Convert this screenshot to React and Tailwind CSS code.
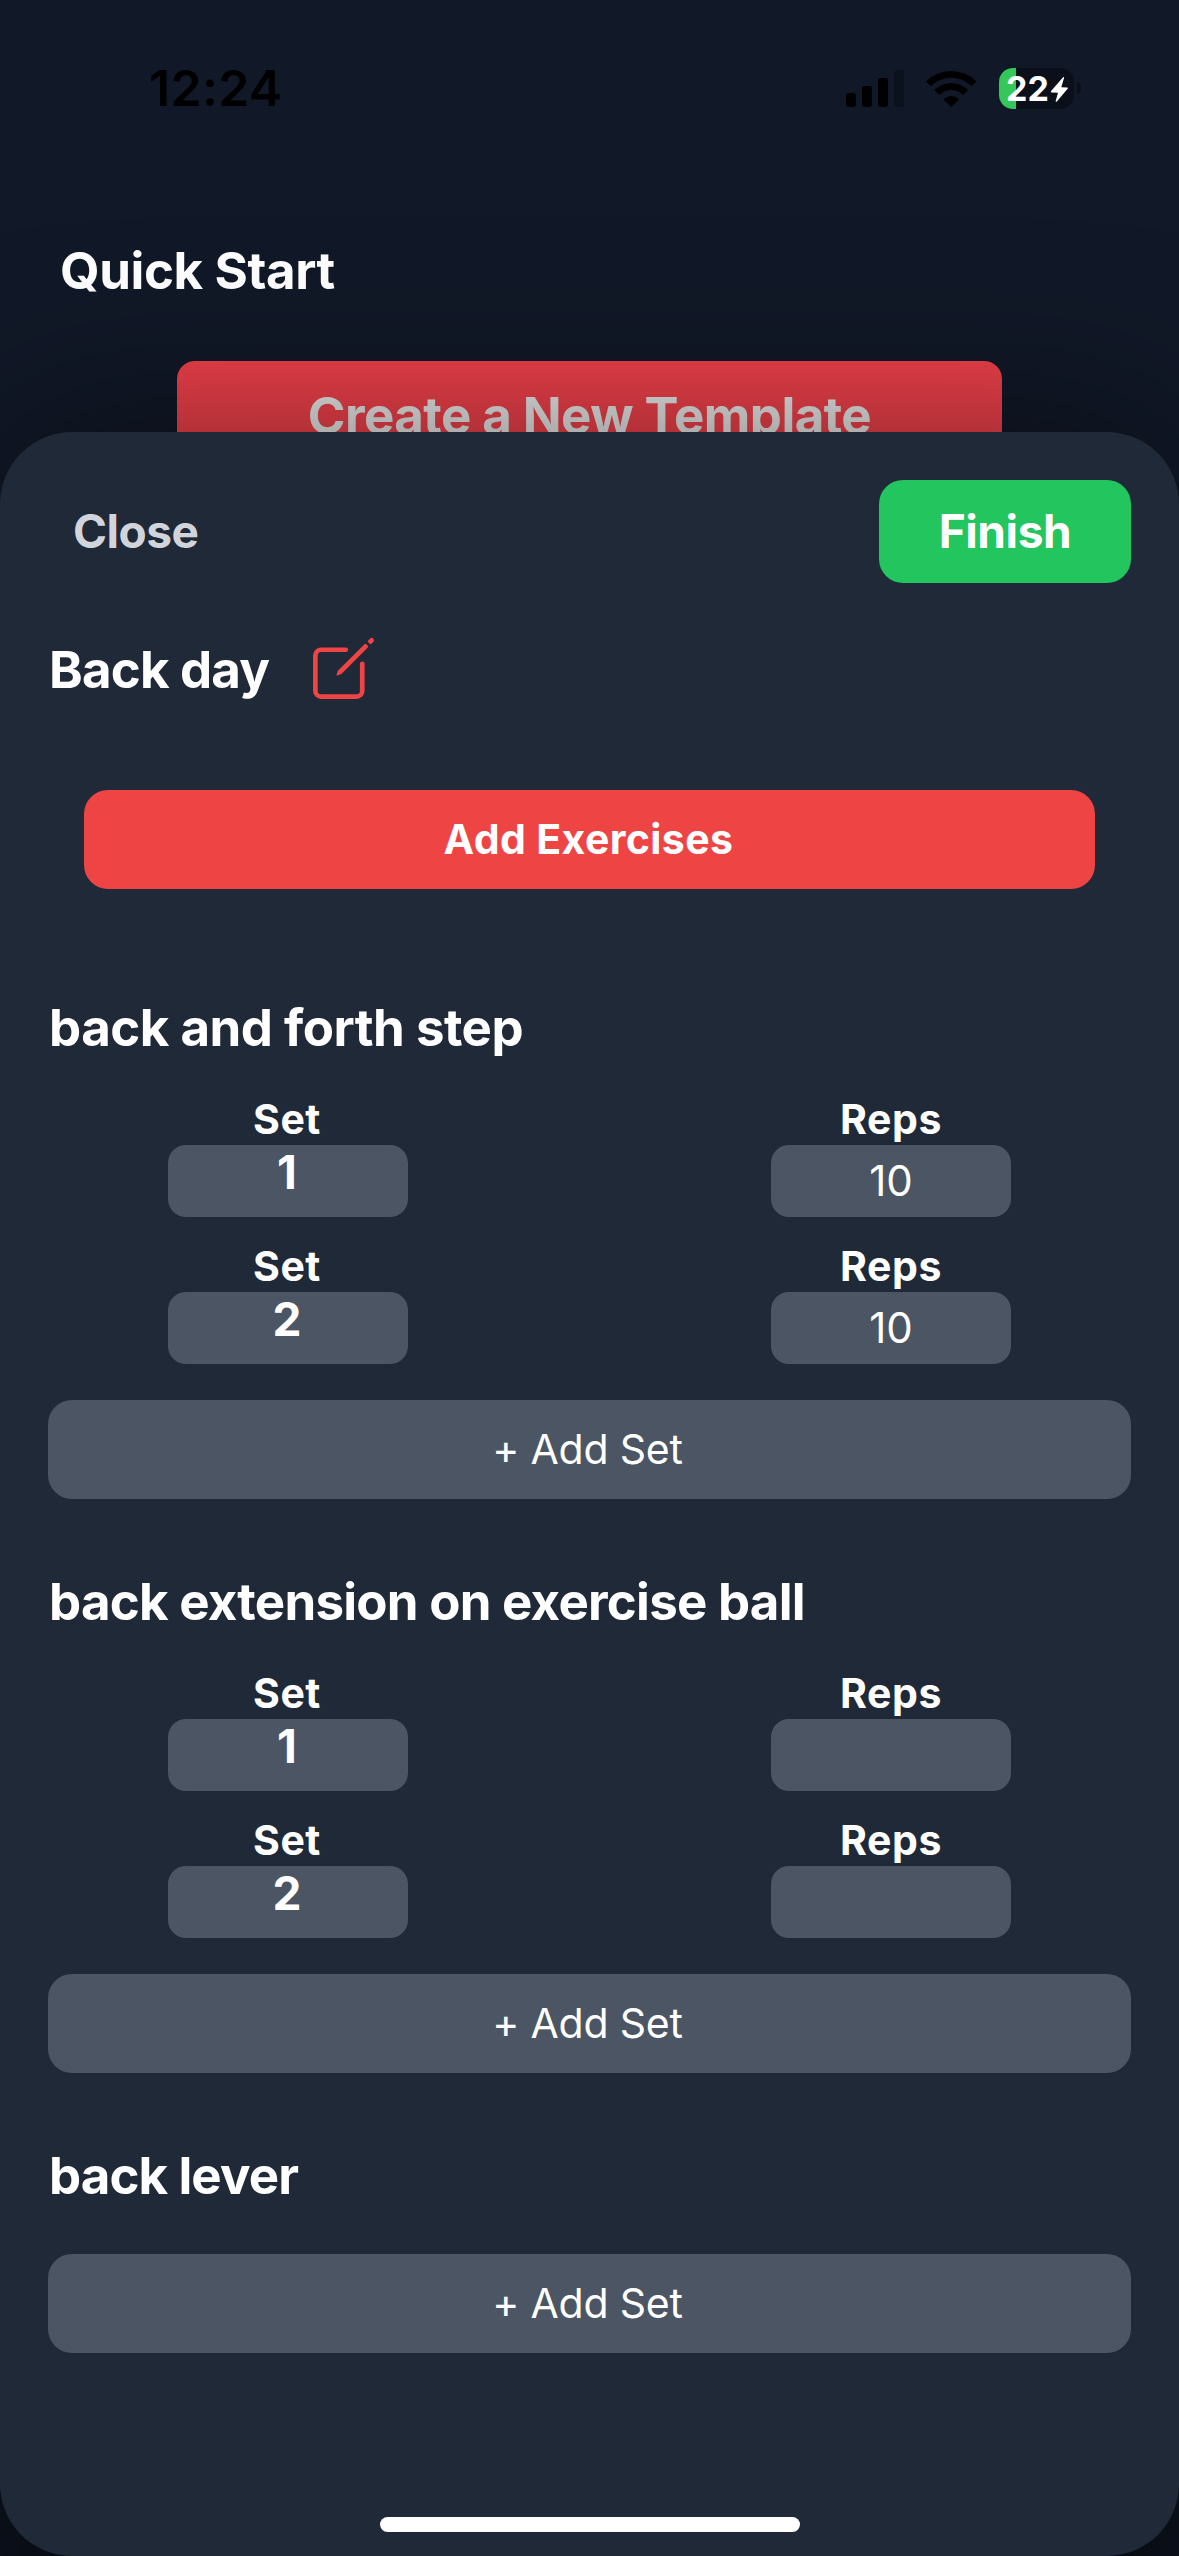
import React from "react";
import { IoCreateOutline } from "react-icons/io5";

const exercises = [
  { name: "back and forth step", tracking: "tracking-[-0.5px]", sets: ["10", "10"] },
  { name: "back extension on exercise ball", tracking: "tracking-[-0.75px]", sets: ["", ""] },
  { name: "back lever", tracking: "tracking-[-0.9px]", sets: [] },
];

function Signal() {
  return (
    <svg width="58" height="37" viewBox="0 0 58 37">
      <rect x="0" y="23" width="10" height="14" rx="3" />
      <rect x="16" y="16" width="10" height="21" rx="3" />
      <rect x="32" y="8" width="10" height="29" rx="3" />
      <rect x="48" y="0" width="10" height="37" rx="3" opacity="0.25" />
    </svg>
  );
}

function Wifi() {
  return (
    <svg width="50" height="37" viewBox="0 0 50 37">
      <path d="M0.6 10.9A35.5 35.5 0 0 1 49.9 10.9Q50.5 11.6 49.9 12.2L46.2 15.6Q45.5 16.2 44.8 15.6A28.5 28.5 0 0 0 5.7 15.6Q5 16.2 4.3 15.6L0.6 12.2Q0 11.6 0.6 10.9Z" />
      <path d="M9 19.6A23.5 23.5 0 0 1 41.5 19.6Q42.1 20.2 41.5 20.8L37.7 24.4Q37 25 36.3 24.4A16.4 16.4 0 0 0 14.2 24.4Q13.5 25 12.8 24.4L9 20.8Q8.4 20.2 9 19.6Z" />
      <path d="M18 28.7A11 11 0 0 1 32.5 28.7Q33.2 29.4 32.5 30.1L25.9 36.6Q25.25 37.2 24.6 36.6L18 30.1Q17.3 29.4 18 28.7Z" />
    </svg>
  );
}

function Battery() {
  return (
    <div className="flex items-center gap-[3px]">
      <div className="relative flex h-[41px] w-[75px] items-center overflow-hidden rounded-[14px] bg-black/35 pl-[7px]">
        <div className="absolute inset-y-0 left-0 w-[17px] bg-[#34c759]" />
        <span className="relative text-[34px] leading-[41px] font-bold text-white">22</span>
        <svg className="absolute top-0 left-0" width="75" height="41" viewBox="0 0 75 41">
          <path d="M64.3 9L51.9 23.2Q51.6 24.4 52.6 24.5L59 24.7L56.6 33.2Q57 34.3 57.9 33.6L68.8 20.6Q69.2 19.5 68.2 19.4L62.3 19.2L65.1 9.8Q65.1 8.8 64.3 9Z" fill="#fff" />
        </svg>
      </div>
      <div className="h-[12px] w-[4px] rounded-r-[4px] bg-black/35" />
    </div>
  );
}

function SetRow({ number, reps }) {
  return (
    <div className="mb-9 flex justify-between px-[120px] text-center text-white">
      <div className="w-[240px]">
        <div className="h-[39px] pr-[2px] text-[41px] leading-[26px] font-bold tracking-[0.5px]">Set</div>
        <div className="h-[72px] rounded-[18px] bg-[#4b5563] pr-[2px] text-[46px] leading-[54px] font-bold">{number}</div>
      </div>
      <div className="w-[240px]">
        <div className="h-[39px] text-[41px] leading-[26px] font-bold tracking-[0.6px]">Reps</div>
        <div className="h-[72px] rounded-[18px] bg-[#4b5563] text-[42px] leading-[72px]">{reps}</div>
      </div>
    </div>
  );
}

function Exercise({ name, tracking, sets }) {
  return (
    <section>
      <h3 className={`mb-[47px] pl-px text-[51px] leading-[62px] font-bold whitespace-nowrap text-white ${tracking}`}>{name}</h3>
      {sets.map((reps, i) => (
        <SetRow key={i} number={i + 1} reps={reps} />
      ))}
      <button className="block h-[99px] w-full rounded-[24px] bg-[#4b5563] pr-[4px] text-[41px] leading-[99px] tracking-[-0.2px] text-white">
        + Add Set
      </button>
    </section>
  );
}

export default function App() {
  return (
    <div className="h-[2556px] w-[1179px] overflow-hidden bg-[#111827] font-['Inter',sans-serif]">
      <div className="flex items-center justify-between pt-[58px] pr-[98px] pl-[149px]">
        <span className="text-[50px] leading-[60px] font-semibold tracking-[0.3px] text-black">12:24</span>
        <div className="flex items-center">
          <Signal />
          <div className="ml-[22px]">
            <Wifi />
          </div>
          <div className="ml-[23px]">
            <Battery />
          </div>
        </div>
      </div>

      <h1 className="mt-[122px] ml-[60px] text-[51px] leading-[62px] font-bold tracking-[-0.4px] text-white">Quick Start</h1>
      <button className="mx-auto mt-[59px] block h-[111px] w-[825px] rounded-[18px] bg-[#f0414b] pb-[2px] text-[51px] leading-[109px] font-bold tracking-[-0.56px] text-[#e8e8e8]">
        Create a New Template
      </button>

      <main className="relative -mt-10 h-[2124px] rounded-[72px] bg-[#1f2937] px-12 pt-12 shadow-[0_0_180px_rgba(0,0,0,0.5),0_500px_190px_rgba(0,0,0,0.5)]">
        <header className="flex items-center justify-between pl-[25px]">
          <button className="text-[46px] font-bold tracking-[-0.5px] text-[#d1d5db]">Close</button>
          <button className="h-[103px] w-[252px] rounded-[24px] bg-[#22c55e] text-[46px] leading-[103px] font-bold tracking-[-0.4px] text-white">
            Finish
          </button>
        </header>

        <div className="mt-12 flex items-center">
          <h2 className="mt-[2px] w-[220px] pl-px text-[51px] leading-[60px] font-bold tracking-[-0.8px] whitespace-nowrap text-white">Back day</h2>
          <IoCreateOutline className="ml-[38px] size-[75px] text-[#ef4444]" />
        </div>

        <div className="mt-[84px] px-9">
          <button className="block h-[99px] w-full rounded-[24px] bg-[#ef4444] pr-[2px] text-[41px] leading-[99px] font-bold tracking-[0.4px] text-white">
            Add Exercises
          </button>
        </div>

        <div className="mt-[108px] flex flex-col gap-[72px]">
          {exercises.map((exercise) => (
            <Exercise key={exercise.name} {...exercise} />
          ))}
        </div>

        <div className="absolute bottom-6 left-[380px] h-[15px] w-[420px] rounded-full bg-white" />
      </main>
    </div>
  );
}
